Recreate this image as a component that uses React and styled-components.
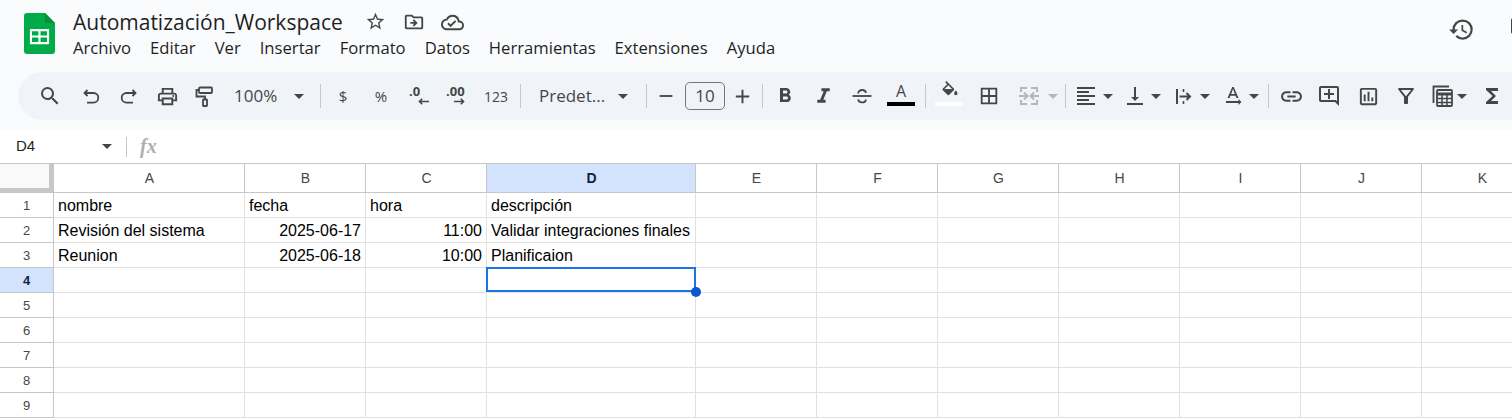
import React from 'react';
import styled, { createGlobalStyle } from 'styled-components';
import {
  MdSearch,
  MdOutlinePrint,
  MdAdd,
  MdRemove,
  MdFormatBold,
  MdFormatItalic,
  MdBorderAll,
  MdFormatAlignLeft,
  MdVerticalAlignBottom,
  MdTextRotationNone,
  MdLink,
  MdOutlineAddComment,
  MdOutlineInsertChart,
  MdOutlineFilterAlt,
  MdFunctions,
  MdStarBorder,
  MdOutlineDriveFileMove,
  MdOutlineCloudDone,
  MdHistory,
  MdOutlineComment,
} from 'react-icons/md';

const GlobalStyle = createGlobalStyle`
  html, body {
    margin: 0;
    padding: 0;
    background: #f9fbfd;
    overflow: hidden;
  }
`;

const COLUMNS = [
  { name: 'A', width: 191 },
  { name: 'B', width: 121 },
  { name: 'C', width: 121 },
  { name: 'D', width: 209, active: true },
  { name: 'E', width: 121 },
  { name: 'F', width: 121 },
  { name: 'G', width: 121 },
  { name: 'H', width: 121 },
  { name: 'I', width: 121 },
  { name: 'J', width: 121 },
  { name: 'K', width: 121 },
];

const ROWS = [
  ['nombre', 'fecha', 'hora', 'descripción'],
  ['Revisión del sistema', '2025-06-17', '11:00', 'Validar integraciones finales'],
  ['Reunion', '2025-06-18', '10:00', 'Planificaion'],
  [],
  [],
  [],
  [],
  [],
  [],
];

const MENU = ['Archivo', 'Editar', 'Ver', 'Insertar', 'Formato', 'Datos', 'Herramientas', 'Extensiones', 'Ayuda'];

const isRight = (text) => /^[\d:-]+$/.test(text || '');

const SheetsLogo = () => (
  <svg width="31" height="41" viewBox="0 0 31 41">
    <path d="M3 0h18l10 10v28a3 3 0 0 1-3 3H3a3 3 0 0 1-3-3V3a3 3 0 0 1 3-3z" fill="#00ac47" />
    <path d="M21 0l10 10H21z" fill="#0a8f3c" />
    <path
      fillRule="evenodd"
      d="M6.5 16h18a.6.6 0 0 1 .6.6v14a.6.6 0 0 1-.6.6h-18a.6.6 0 0 1-.6-.6v-14a.6.6 0 0 1 .6-.6zM8 18.2v4.3h6.4v-4.3zm8.5 0v4.3H23v-4.3zM8 24.6v4.4h6.4v-4.4zm8.5 0V29H23v-4.4z"
      fill="#fff"
    />
  </svg>
);

const StrokeIcon = ({ children, color = '#444746', width = 1.8 }) => (
  <svg width="24" height="24" viewBox="0 0 24 24" fill="none" stroke={color} strokeWidth={width}>
    {children}
  </svg>
);

const UndoIcon = () => (
  <StrokeIcon>
    <path d="M8.5 6L5.5 9l3 3" />
    <path d="M5.5 9h9a4.6 4.6 0 0 1 0 9.6H8" />
  </StrokeIcon>
);

const RedoIcon = () => (
  <StrokeIcon>
    <path d="M15.5 6l3 3-3 3" />
    <path d="M18.5 9h-9a4.6 4.6 0 0 0 0 9.6H16" />
  </StrokeIcon>
);

const PaintIcon = () => (
  <StrokeIcon>
    <rect x="7" y="3.5" width="13" height="5.5" rx="1" />
    <path d="M7 6H4.5v6.5H13v3" />
    <rect x="11" y="15.5" width="4" height="6.5" rx=".5" />
  </StrokeIcon>
);

const StrikeIcon = () => (
  <StrokeIcon>
    <path d="M2.5 12h19" />
    <path d="M8.2 9.4C8.2 7.4 9.9 6 12 6s3.8 1 4 2.8" />
    <path d="M8.2 15.4c.2 1.9 1.8 3 3.8 3s3.8-1.2 3.8-3" />
  </StrokeIcon>
);

const MergeIcon = () => (
  <StrokeIcon color="#b4b7bb" width={2}>
    <path d="M10 4H4v4M4 16v4h6M14 4h6v4M20 16v4h-6" />
    <path d="M2 12h8M7 8.5l3.5 3.5L7 15.5M22 12h-8M17 8.5L13.5 12l3.5 3.5" />
  </StrokeIcon>
);

const OverflowIcon = () => (
  <StrokeIcon width={2}>
    <path d="M6 5v15" />
    <path d="M12.5 5v3M12.5 17v3" strokeWidth="1.6" />
    <path d="M8.5 12.5H19M15.5 9l3.5 3.5-3.5 3.5" />
  </StrokeIcon>
);

const FunctionsIcon = () => (
  <StrokeIcon>
    <path d="M19 2.5H3.5V19" />
    <rect x="7" y="6" width="15" height="16" rx="1" />
    <path d="M7 10h15" strokeWidth="3" />
    <path d="M7 14.5h15M7 18.5h15M12 11v11M17 11v11" strokeWidth="1.5" />
  </StrokeIcon>
);

const FillIcon = () => (
  <svg width="24" height="24" viewBox="0 0 24 24" fill="#444746">
    <path d="M16.56 8.94L7.62 0 6.21 1.41l2.38 2.38-5.15 5.15c-.59.59-.59 1.54 0 2.12l5.5 5.5c.29.29.68.44 1.06.44s.77-.15 1.06-.44l5.5-5.5c.59-.58.59-1.53 0-2.12zM5.21 10L10 5.21 14.79 10H5.21zM19 11.5s-2 2.17-2 3.5c0 1.1.9 2 2 2s2-.9 2-2c0-1.33-2-3.5-2-3.5z" />
    <path d="M5.2 10h9.6L10 14.8z" />
  </svg>
);

const SmallArrow = ({ left }) => (
  <svg width="11" height="7" viewBox="0 0 11 7" fill="none" stroke="#444746" strokeWidth="1.6">
    {left ? <path d="M11 3.5H1.5M4.2 .8L1.5 3.5l2.7 2.7" /> : <path d="M0 3.5h9.5M6.8 .8l2.7 2.7-2.7 2.7" />}
  </svg>
);

const App = () => (
  <Page>
    <GlobalStyle />
    <Header>
      <LogoSlot>
        <SheetsLogo />
      </LogoSlot>
      <TitleBlock>
        <TitleRow>
          <Title>Automatización_Workspace</Title>
          <TitleIcons>
            <TitleIcon><MdStarBorder size={21} /></TitleIcon>
            <TitleIcon><MdOutlineDriveFileMove size={22} /></TitleIcon>
            <TitleIcon><MdOutlineCloudDone size={23} /></TitleIcon>
          </TitleIcons>
        </TitleRow>
        <MenuBar>
          {MENU.map((item) => (
            <MenuItem key={item}>{item}</MenuItem>
          ))}
        </MenuBar>
      </TitleBlock>
      <HeaderRight>
        <HistoryBtn><MdHistory size={27} /></HistoryBtn>
        <MdOutlineComment size={24} />
      </HeaderRight>
    </Header>

    <ToolbarRow>
      <Toolbar>
        <ToolBtn $w={38}><MdSearch size={24} /></ToolBtn>
        <ToolBtn $w={38} $ml={3}><UndoIcon /></ToolBtn>
        <ToolBtn $w={38}><RedoIcon /></ToolBtn>
        <ToolBtn $w={38}><MdOutlinePrint size={23} /></ToolBtn>
        <ToolBtn $w={36}><PaintIcon /></ToolBtn>
        <SelectBtn $w={88} $pl={12} $pr={6}>
          <SelectText>100%</SelectText>
          <Caret />
        </SelectBtn>
        <Sep $ml={10} $mr={3} />
        <GlyphBtn $w={38} $fs={15}>$</GlyphBtn>
        <GlyphBtn $w={38} $fs={15}>%</GlyphBtn>
        <ToolBtn $w={40}>
          <Decimal>
            <DecimalText>.0</DecimalText>
            <ArrowSlot $ml={9}><SmallArrow left /></ArrowSlot>
          </Decimal>
        </ToolBtn>
        <ToolBtn $w={34}>
          <Decimal>
            <DecimalText>.00</DecimalText>
            <ArrowSlot $ml={8}><SmallArrow /></ArrowSlot>
          </Decimal>
        </ToolBtn>
        <GlyphBtn $w={44} $fs={14}>123</GlyphBtn>
        <Sep $ml={2} />
        <SelectBtn $w={115} $pl={18} $pr={8}>
          <SelectText>Predet...</SelectText>
          <Caret />
        </SelectBtn>
        <Sep $ml={10} />
        <ToolBtn $w={38}><MdRemove size={22} /></ToolBtn>
        <SizeBox>10</SizeBox>
        <ToolBtn $w={34}><MdAdd size={23} /></ToolBtn>
        <Sep $ml={3} $mr={3} />
        <ToolBtn $w={38}><MdFormatBold size={24} /></ToolBtn>
        <ToolBtn $w={38}><MdFormatItalic size={25} /></ToolBtn>
        <ToolBtn $w={40}><StrikeIcon /></ToolBtn>
        <ToolBtn $w={38}>
          <Swatch>
            <SwatchLetter>A</SwatchLetter>
            <SwatchBar $color="#000000" />
          </Swatch>
        </ToolBtn>
        <Sep $ml={5} $mr={4} />
        <ToolBtn $w={38}>
          <Swatch>
            <FillSlot><FillIcon /></FillSlot>
            <SwatchBar $color="#ffffff" />
          </Swatch>
        </ToolBtn>
        <ToolBtn $w={42}><MdBorderAll size={22} /></ToolBtn>
        <ToolBtn $w={38}><MergeIcon /></ToolBtn>
        <ToolBtn $w={10}><Caret $muted /></ToolBtn>
        <Sep $ml={7} />
        <SplitBtn $w={39} $ml={8}><MdFormatAlignLeft size={24} /><Caret /></SplitBtn>
        <SplitBtn $w={38} $ml={10}><MdVerticalAlignBottom size={24} /><Caret /></SplitBtn>
        <SplitBtn $w={39} $ml={10}><OverflowIcon /><Caret /></SplitBtn>
        <SplitBtn $w={38} $ml={11}><MdTextRotationNone size={24} /><Caret /></SplitBtn>
        <Sep $ml={9} $mr={3} />
        <ToolBtn $w={38}><MdLink size={25} /></ToolBtn>
        <ToolBtn $w={38}><MdOutlineAddComment size={24} /></ToolBtn>
        <ToolBtn $w={40}><MdOutlineInsertChart size={23} /></ToolBtn>
        <ToolBtn $w={36}><MdOutlineFilterAlt size={24} /></ToolBtn>
        <SplitBtn $w={37} $ml={6}><FunctionsIcon /><Caret /></SplitBtn>
        <ToolBtn $w={24} $ml={13}><MdFunctions size={24} /></ToolBtn>
      </Toolbar>
    </ToolbarRow>

    <FormulaBar>
      <NameBox>
        <NameText>D4</NameText>
        <Caret />
      </NameBox>
      <FormulaSep />
      <FxLabel>fx</FxLabel>
    </FormulaBar>

    <Grid>
      <Corner />
      {COLUMNS.map((col) => (
        <ColHead key={col.name} $active={col.active}>{col.name}</ColHead>
      ))}
      {ROWS.map((row, r) => (
        <React.Fragment key={r}>
          <RowHead $active={r === 3}>{r + 1}</RowHead>
          {COLUMNS.map((col, c) => (
            <Cell key={col.name} $right={isRight(row[c])}>
              {row[c]}
              {r === 3 && col.active && (
                <Selection>
                  <Handle />
                </Selection>
              )}
            </Cell>
          ))}
        </React.Fragment>
      ))}
    </Grid>
  </Page>
);

export default App;

const UI_FONT = `'Open Sans', 'Noto Sans', Arial, sans-serif`;
const ICON = '#444746';

const Page = styled.div`
  width: 1512px;
  height: 418px;
  overflow: hidden;
  display: flex;
  flex-direction: column;
  background: #f9fbfd;
  font-family: ${UI_FONT};
  color: #1f1f1f;
`;

const Header = styled.header`
  height: 72px;
  flex: none;
  display: flex;
  padding-left: 24px;
`;

const LogoSlot = styled.div`
  margin-top: 13px;
  width: 31px;
  height: 41px;
`;

const TitleBlock = styled.div`
  margin-left: 18px;
  padding-top: 9px;
  display: flex;
  flex-direction: column;
`;

const TitleRow = styled.div`
  display: flex;
  align-items: center;
  height: 26px;
`;

const Title = styled.div`
  width: 269px;
  font-size: 21px;
  line-height: 26px;
  white-space: nowrap;
`;

const TitleIcons = styled.div`
  display: flex;
  margin-left: 14px;
  color: ${ICON};
`;

const TitleIcon = styled.div`
  width: 38.5px;
  display: flex;
  justify-content: center;
`;

const MenuBar = styled.nav`
  display: flex;
  gap: 19px;
  margin-top: 2px;
`;

const MenuItem = styled.span`
  font-size: 16.65px;
  line-height: 22px;
  white-space: nowrap;
`;

const HeaderRight = styled.div`
  margin-left: auto;
  margin-right: -21px;
  padding-top: 16px;
  display: flex;
  align-items: flex-start;
  color: ${ICON};
  svg {
    flex: none;
  }
`;

const HistoryBtn = styled.div`
  width: 36px;
  height: 27px;
  margin-right: 30px;
  display: flex;
  justify-content: center;
`;

const ToolbarRow = styled.div`
  height: 58px;
  flex: none;
  padding-left: 18px;
`;

const Toolbar = styled.div`
  width: 1520px;
  height: 48px;
  box-sizing: border-box;
  padding-left: 13px;
  display: flex;
  align-items: center;
  background: #f0f4f9;
  border-radius: 24px;
  color: ${ICON};
`;

const ToolBtn = styled.div`
  flex: none;
  width: ${(p) => p.$w}px;
  margin-left: ${(p) => p.$ml || 0}px;
  height: 28px;
  display: flex;
  align-items: center;
  justify-content: center;
`;

const SplitBtn = styled(ToolBtn)`
  justify-content: space-between;
`;

const GlyphBtn = styled(ToolBtn)`
  font-size: ${(p) => p.$fs}px;
`;

const SelectBtn = styled(ToolBtn)`
  box-sizing: border-box;
  justify-content: space-between;
  padding: 0 ${(p) => p.$pr}px 0 ${(p) => p.$pl}px;
`;

const SelectText = styled.span`
  font-size: 17px;
  white-space: nowrap;
  margin-top: -2px;
`;

const Caret = styled.span`
  flex: none;
  width: 0;
  height: 0;
  border-left: 5px solid transparent;
  border-right: 5px solid transparent;
  border-top: 5px solid ${(p) => (p.$muted ? '#b4b7bb' : ICON)};
`;

const Sep = styled.div`
  flex: none;
  width: 1px;
  height: 24px;
  background: #c7c7c7;
  margin-left: ${(p) => p.$ml || 0}px;
  margin-right: ${(p) => p.$mr || 0}px;
`;

const Decimal = styled.div`
  display: flex;
  flex-direction: column;
  width: 22px;
  margin-top: -4px;
`;

const DecimalText = styled.span`
  font-size: 13px;
  font-weight: 700;
  line-height: 14px;
`;

const ArrowSlot = styled.span`
  display: block;
  height: 7px;
  line-height: 0;
  margin-left: ${(p) => p.$ml}px;
`;

const SizeBox = styled.div`
  flex: none;
  box-sizing: border-box;
  width: 40px;
  height: 28px;
  padding-bottom: 2px;
  border: 1px solid #747775;
  border-radius: 5px;
  display: flex;
  align-items: center;
  justify-content: center;
  font-size: 17px;
`;

const Swatch = styled.div`
  width: 28px;
  height: 28px;
  display: flex;
  flex-direction: column;
  align-items: center;
`;

const SwatchLetter = styled.span`
  font-size: 16px;
  line-height: 19px;
  height: 19px;
`;

const FillSlot = styled.span`
  height: 19px;
  width: 24px;
  margin-top: -1px;
  margin-bottom: 1px;
  line-height: 0;
  svg {
    width: 20px;
    height: 20px;
    margin-left: 3px;
  }
`;

const SwatchBar = styled.span`
  width: 28px;
  height: 4px;
  margin-top: 1px;
  background: ${(p) => p.$color};
`;

const FormulaBar = styled.div`
  height: 33px;
  flex: none;
  display: flex;
  align-items: center;
  background: #ffffff;
`;

const NameBox = styled.div`
  width: 112px;
  box-sizing: border-box;
  padding-left: 16px;
  display: flex;
  align-items: center;
  justify-content: space-between;
`;

const NameText = styled.span`
  font-family: 'Liberation Sans', Arial, sans-serif;
  font-size: 15px;
  margin-top: -2px;
`;

const FormulaSep = styled.div`
  width: 1px;
  height: 20px;
  margin-left: 14px;
  background: #c7c7c7;
`;

const FxLabel = styled.span`
  margin-left: 13px;
  font-family: 'Liberation Serif', serif;
  font-style: italic;
  font-weight: 700;
  font-size: 20px;
  color: #acafb1;
`;

const Grid = styled.div`
  width: 1543px;
  display: grid;
  grid-template-columns: 54px ${COLUMNS.map((c) => `${c.width}px`).join(' ')};
  grid-template-rows: 29px repeat(9, 25px);
  border-top: 1px solid #c7c7c7;
  background: #ffffff;
  font-family: 'Liberation Sans', Arial, sans-serif;
`;

const Corner = styled.div`
  box-sizing: border-box;
  background: #f8f9fa;
  border-right: 5px solid #c7c7c7;
  border-bottom: 5px solid #c7c7c7;
`;

const ColHead = styled.div`
  box-sizing: border-box;
  display: flex;
  align-items: center;
  justify-content: center;
  padding: 0 0 1px 1px;
  font-size: 14px;
  font-weight: ${(p) => (p.$active ? 700 : 400)};
  color: ${(p) => (p.$active ? '#0b1f4e' : '#444746')};
  background: ${(p) => (p.$active ? '#d3e3fd' : '#ffffff')};
  border-right: 1px solid #c7c7c7;
  border-bottom: 1px solid #c7c7c7;
`;

const RowHead = styled.div`
  box-sizing: border-box;
  display: flex;
  align-items: center;
  justify-content: center;
  font-size: 13px;
  font-weight: ${(p) => (p.$active ? 700 : 400)};
  color: ${(p) => (p.$active ? '#0b1f4e' : '#444746')};
  background: ${(p) => (p.$active ? '#d3e3fd' : '#ffffff')};
  border-right: 1px solid #c7c7c7;
  border-bottom: 1px solid #c7c7c7;
`;

const Cell = styled.div`
  position: relative;
  box-sizing: border-box;
  padding: 2px 4px 0;
  display: flex;
  align-items: center;
  justify-content: ${(p) => (p.$right ? 'flex-end' : 'flex-start')};
  font-size: 16px;
  color: #000000;
  white-space: nowrap;
  border-right: 1px solid #e1e1e1;
  border-bottom: 1px solid #e1e1e1;
`;

const Selection = styled.div`
  position: absolute;
  z-index: 1;
  top: -1px;
  left: -1px;
  right: -1px;
  bottom: 0;
  border: 2px solid #1a73e8;
`;

const Handle = styled.span`
  position: absolute;
  right: -7px;
  bottom: -7px;
  width: 10px;
  height: 10px;
  border-radius: 50%;
  background: #0b57d0;
`;
